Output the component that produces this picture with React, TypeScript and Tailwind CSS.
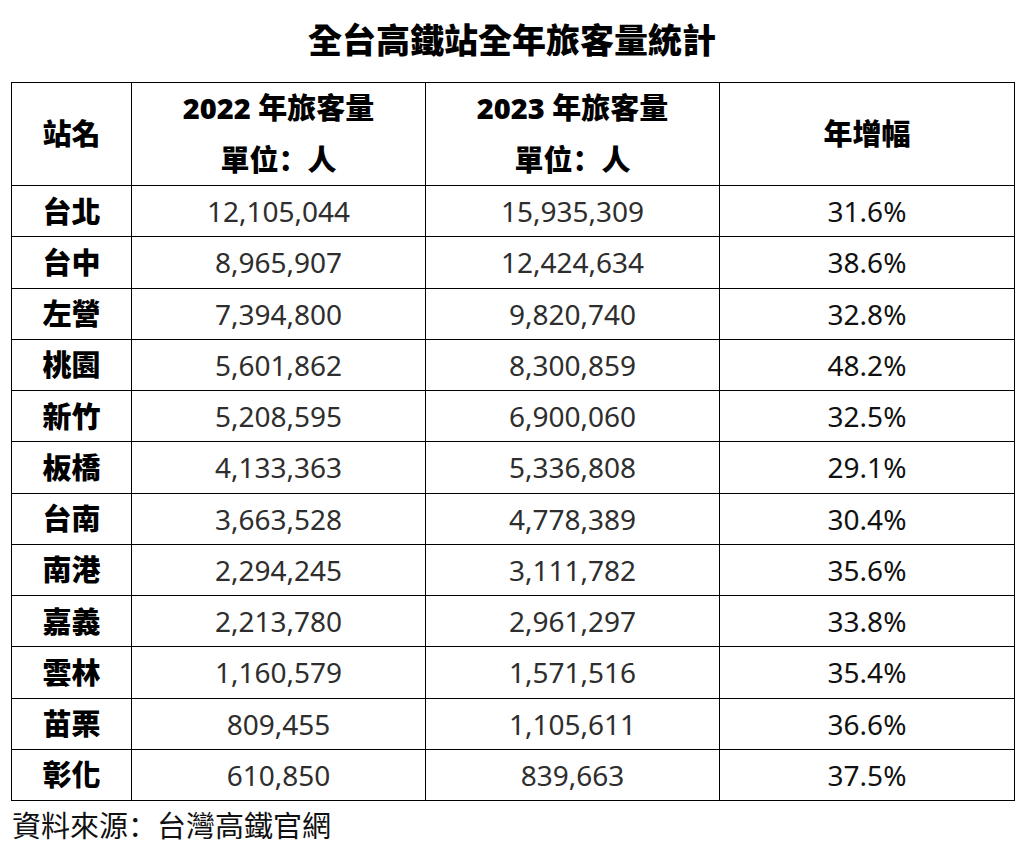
import React from "react";

const rows: [string, string, string, string][] = [
  ["台北", "12,105,044", "15,935,309", "31.6%"],
  ["台中", "8,965,907", "12,424,634", "38.6%"],
  ["左營", "7,394,800", "9,820,740", "32.8%"],
  ["桃園", "5,601,862", "8,300,859", "48.2%"],
  ["新竹", "5,208,595", "6,900,060", "32.5%"],
  ["板橋", "4,133,363", "5,336,808", "29.1%"],
  ["台南", "3,663,528", "4,778,389", "30.4%"],
  ["南港", "2,294,245", "3,111,782", "35.6%"],
  ["嘉義", "2,213,780", "2,961,297", "33.8%"],
  ["雲林", "1,160,579", "1,571,516", "35.4%"],
  ["苗栗", "809,455", "1,105,611", "36.6%"],
  ["彰化", "610,850", "839,663", "37.5%"],
];

const font = {
  fontFamily: '"Noto Sans", "Noto Sans CJK TC", sans-serif',
};

const colonFont = {
  fontFamily: '"Noto Sans CJK SC", sans-serif',
};

function Colon() {
  return (
    <span lang="zh-CN" style={colonFont}>
      ：
    </span>
  );
}

export default function App() {
  return (
    <div className="w-[1024px] h-[845px] bg-white text-black" style={font}>
      <div className="h-[82px] flex items-center justify-center">
        <h1 className="text-[34px] font-black leading-none pb-[2px]">全台高鐵站全年旅客量統計</h1>
      </div>
      <table className="ml-[11px] w-[1003px] border-collapse table-fixed">
        <colgroup>
          <col className="w-[120px]" />
          <col className="w-[294px]" />
          <col className="w-[294px]" />
          <col className="w-[295px]" />
        </colgroup>
        <thead>
          <tr className="h-[102px]">
            <th className="border-[1.5px] border-black text-[29px] font-black leading-[50px] text-center align-middle">站名</th>
            <th className="border-[1.5px] border-black text-[29px] font-black leading-[50px] text-center align-middle">
              <div>2022 年旅客量</div>
              <div>
                單位<Colon />人
              </div>
            </th>
            <th className="border-[1.5px] border-black text-[29px] font-black leading-[50px] text-center align-middle">
              <div>2023 年旅客量</div>
              <div>
                單位<Colon />人
              </div>
            </th>
            <th className="border-[1.5px] border-black text-[29px] font-black leading-[50px] text-center align-middle">年增幅</th>
          </tr>
        </thead>
        <tbody>
          {rows.map((r) => (
            <tr key={r[0]} className="h-[51.25px]">
              <td className="border-[1.5px] border-black text-[29px] font-black leading-none text-center align-middle">{r[0]}</td>
              <td className="border-[1.5px] border-black text-[28px] leading-none text-center align-middle text-[#2e2e2e]">{r[1]}</td>
              <td className="border-[1.5px] border-black text-[28px] leading-none text-center align-middle text-[#2e2e2e]">{r[2]}</td>
              <td className="border-[1.5px] border-black text-[28px] leading-none text-center align-middle text-[#111111]">{r[3]}</td>
            </tr>
          ))}
        </tbody>
      </table>
      <div className="pl-[12px] pt-[9px] text-[29px] leading-none text-[#111111]">
        資料來源<Colon />台灣高鐵官網
      </div>
    </div>
  );
}
